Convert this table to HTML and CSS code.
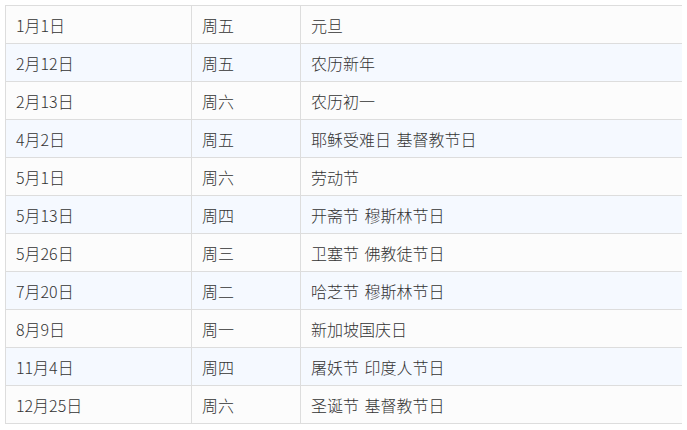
FILE: index.html
```html
<!DOCTYPE html>
<html lang="zh">
<head>
<meta charset="utf-8">
<link rel="stylesheet" href="styles.css">
</head>
<body>
<table class="holidays">
  <colgroup><col class="c-date"><col class="c-day"><col class="c-name"></colgroup>
  <tbody>
    <tr><td>1月1日</td><td>周五</td><td>元旦</td></tr>
    <tr><td>2月12日</td><td>周五</td><td>农历新年</td></tr>
    <tr><td>2月13日</td><td>周六</td><td>农历初一</td></tr>
    <tr><td>4月2日</td><td>周五</td><td>耶稣受难日 基督教节日</td></tr>
    <tr><td>5月1日</td><td>周六</td><td>劳动节</td></tr>
    <tr><td>5月13日</td><td>周四</td><td>开斋节 穆斯林节日</td></tr>
    <tr><td>5月26日</td><td>周三</td><td>卫塞节 佛教徒节日</td></tr>
    <tr><td>7月20日</td><td>周二</td><td>哈芝节 穆斯林节日</td></tr>
    <tr><td>8月9日</td><td>周一</td><td>新加坡国庆日</td></tr>
    <tr><td>11月4日</td><td>周四</td><td>屠妖节 印度人节日</td></tr>
    <tr><td>12月25日</td><td>周六</td><td>圣诞节 基督教节日</td></tr>
  </tbody>
</table>
</body>
</html>
```
FILE: styles.css
```css
html, body { background: #ffffff; }
body {
  margin: 5px;
  font-family: "Noto Sans CJK SC", "Noto Sans", sans-serif;
  font-size: 16px;
  font-weight: 300;
  color: #333333;
}
.holidays {
  width: 677px;
  border-collapse: collapse;
  table-layout: fixed;
}
.c-date { width: 186px; }
.c-day { width: 109px; }
.c-name { width: 382px; }
.holidays td {
  padding: 0 10px;
  border: 1px solid #dddddd;
  vertical-align: middle;
  line-height: 22px;
  word-spacing: 2px;
  box-sizing: border-box;
  height: 38px;
}
.holidays tr:nth-child(odd) td { background: #fcfcfc; }
.holidays tr:nth-child(even) td { background: #f5f9ff; }
```
